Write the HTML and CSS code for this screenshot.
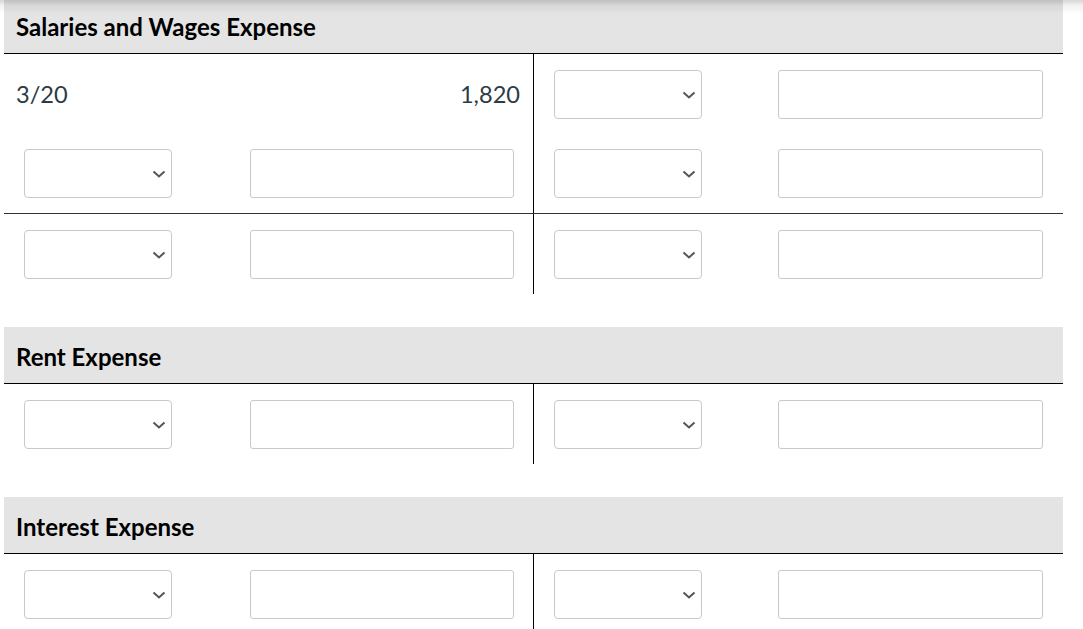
FILE: index.html
```html
<!DOCTYPE html>
<html lang="en">
<head>
<meta charset="utf-8">
<title>T-Accounts</title>
<link rel="stylesheet" href="styles.css">
</head>
<body>
<div class="top-shadow"></div>
<main class="page">

  <section class="account first">
    <h2 class="account-title">Salaries and Wages Expense</h2>
    <div class="row">
      <div class="cell debit text-cell"><span>3/20</span><span>1,820</span></div>
      <div class="cell credit">
        <div class="select-wrap"><select class="sel"><option></option></select><svg class="chev" width="14" height="8" viewBox="0 0 14 8"><path d="M1.5 1.5 L7 6.5 L12.5 1.5" fill="none" stroke="#555" stroke-width="2"/></svg></div>
        <input class="amount" type="text">
      </div>
    </div>
    <div class="row ruled">
      <div class="cell debit">
        <div class="select-wrap"><select class="sel"><option></option></select><svg class="chev" width="14" height="8" viewBox="0 0 14 8"><path d="M1.5 1.5 L7 6.5 L12.5 1.5" fill="none" stroke="#555" stroke-width="2"/></svg></div>
        <input class="amount" type="text">
      </div>
      <div class="cell credit">
        <div class="select-wrap"><select class="sel"><option></option></select><svg class="chev" width="14" height="8" viewBox="0 0 14 8"><path d="M1.5 1.5 L7 6.5 L12.5 1.5" fill="none" stroke="#555" stroke-width="2"/></svg></div>
        <input class="amount" type="text">
      </div>
    </div>
    <div class="row">
      <div class="cell debit">
        <div class="select-wrap"><select class="sel"><option></option></select><svg class="chev" width="14" height="8" viewBox="0 0 14 8"><path d="M1.5 1.5 L7 6.5 L12.5 1.5" fill="none" stroke="#555" stroke-width="2"/></svg></div>
        <input class="amount" type="text">
      </div>
      <div class="cell credit">
        <div class="select-wrap"><select class="sel"><option></option></select><svg class="chev" width="14" height="8" viewBox="0 0 14 8"><path d="M1.5 1.5 L7 6.5 L12.5 1.5" fill="none" stroke="#555" stroke-width="2"/></svg></div>
        <input class="amount" type="text">
      </div>
    </div>
  </section>

  <section class="account">
    <h2 class="account-title">Rent Expense</h2>
    <div class="row">
      <div class="cell debit">
        <div class="select-wrap"><select class="sel"><option></option></select><svg class="chev" width="14" height="8" viewBox="0 0 14 8"><path d="M1.5 1.5 L7 6.5 L12.5 1.5" fill="none" stroke="#555" stroke-width="2"/></svg></div>
        <input class="amount" type="text">
      </div>
      <div class="cell credit">
        <div class="select-wrap"><select class="sel"><option></option></select><svg class="chev" width="14" height="8" viewBox="0 0 14 8"><path d="M1.5 1.5 L7 6.5 L12.5 1.5" fill="none" stroke="#555" stroke-width="2"/></svg></div>
        <input class="amount" type="text">
      </div>
    </div>
  </section>

  <section class="account">
    <h2 class="account-title">Interest Expense</h2>
    <div class="row">
      <div class="cell debit">
        <div class="select-wrap"><select class="sel"><option></option></select><svg class="chev" width="14" height="8" viewBox="0 0 14 8"><path d="M1.5 1.5 L7 6.5 L12.5 1.5" fill="none" stroke="#555" stroke-width="2"/></svg></div>
        <input class="amount" type="text">
      </div>
      <div class="cell credit">
        <div class="select-wrap"><select class="sel"><option></option></select><svg class="chev" width="14" height="8" viewBox="0 0 14 8"><path d="M1.5 1.5 L7 6.5 L12.5 1.5" fill="none" stroke="#555" stroke-width="2"/></svg></div>
        <input class="amount" type="text">
      </div>
    </div>
  </section>

</main>
</body>
</html>
```

FILE: styles.css
```css
* { box-sizing: border-box; }

html, body {
  margin: 0;
  padding: 0;
  background: #fff;
  font-family: Lato, "Open Sans", sans-serif;
  color: #2d3b45;
  overflow: hidden;
}

.top-shadow {
  position: fixed;
  top: 0;
  left: 0;
  right: 0;
  height: 14px;
  background: linear-gradient(to bottom, rgba(0,0,0,0.16), rgba(0,0,0,0.05) 40%, rgba(0,0,0,0));
  pointer-events: none;
  z-index: 10;
}

.page {
  margin-left: 4px;
  width: 1059px;
}

.account {
  margin-bottom: 33px;
}

.account.first {
  margin-top: -3px;
}

.account-title {
  margin: 0;
  height: 57px;
  padding: 15px 12px 0;
  background: #e4e4e4;
  border-bottom: 1px solid #000;
  font-size: 24px;
  line-height: 30px;
  font-weight: 700;
  color: #000;
}

.row {
  display: flex;
  height: 80px;
}

.row.ruled {
  border-bottom: 1px solid #2d3336;
}

.cell {
  flex: 0 0 529px;
  display: flex;
  align-items: center;
  justify-content: space-between;
  padding: 0 19px 0 20px;
}

.cell.credit {
  flex-basis: 530px;
  border-left: 1px solid #000;
  padding: 0 20px 0 20px;
}

.text-cell {
  padding: 0 13px 0 12px;
  font-size: 23.6px;
}

.select-wrap {
  position: relative;
  width: 148px;
  height: 49px;
}

.sel {
  appearance: none;
  -webkit-appearance: none;
  width: 100%;
  height: 100%;
  margin: 0;
  border: 1px solid #c9c9c9;
  border-radius: 4px;
  background: #fff;
  font: inherit;
}

.chev {
  position: absolute;
  right: 6px;
  top: 21px;
  pointer-events: none;
}

.amount {
  width: 264px;
  height: 49px;
  margin: 0;
  border: 1px solid #c9c9c9;
  border-radius: 3px;
  background: #fff;
  font: inherit;
}

.cell.credit .amount {
  width: 265px;
}
```
